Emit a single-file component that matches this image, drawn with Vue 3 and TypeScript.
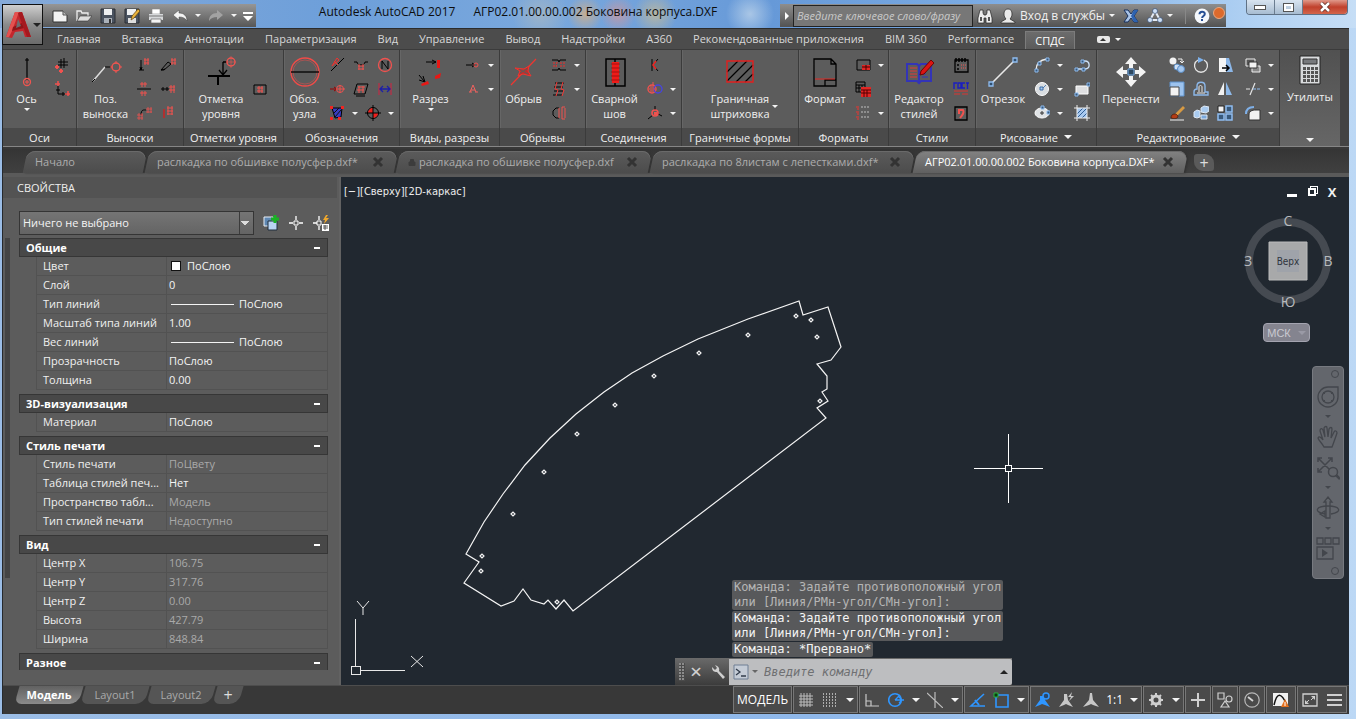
<script setup lang="ts">
import { h, ref } from 'vue'
import type { FunctionalComponent } from 'vue'

const shapes: Record<string, string> = {
  // application bar
  logo: '<path d="M2 27 11 2h7l9 25h-6l-2-6-8 1-3 6z" fill="#c3262c"/><path d="M11 2h4L8 21l-3 6H2z" fill="#e4514f"/><path d="m9 17 9-4 2 5-12 3z" fill="#8f1519"/><path d="m14 9 3 7-5 2z" fill="#6d6d70"/><path d="m18 2 9 25h-4L14 3z" fill="#a5191f"/>',
  new: '<path d="M1 3h10l4 4v7H1z" fill="#f2f2f2" stroke="#333"/><path d="M11 3v4h4" fill="#bbb" stroke="#555"/>',
  open: '<path d="M1 13V3h4l1 2h6v3" fill="none" stroke="#eee" stroke-width="1.3"/><path d="M1 13 4 8h12l-4 5z" fill="#ddd" stroke="#333" stroke-width=".6"/>',
  save: '<path d="M1 1h14v14H1z" fill="#4a5360" stroke="#2b2f35"/><path d="M4 1h8v6H4z" fill="#eef0f2"/><path d="M4 10h8v5H4z" fill="#aab1ba"/><path d="M9 11h2v4H9z" fill="#333"/>',
  saveas: '<path d="M1 1h14v14H1z" fill="#4a5360" stroke="#2b2f35"/><path d="M3 1h9v6H3z" fill="#eef0f2"/><path d="M4 10h8v5H4z" fill="#ddd"/><path d="m7 12 1-4 6-7 2 2-6 7z" fill="#e8b23c" stroke="#5d4210" stroke-width=".7"/>',
  print: '<path d="M4 1h8v5H4z" fill="#fff" stroke="#888" stroke-width=".6"/><path d="M1 6h14v6H1z" fill="#d6d8da"/><path d="M1 8h14" stroke="#777"/><path d="M3 11h10v4H3z" fill="#f4f4f4" stroke="#666" stroke-width=".7"/>',
  undo: '<path d="M1 7 7 2v3c5 0 8 3 8 8-2-3-4-4-8-4v3z" fill="#f3f3f3" stroke="#444" stroke-width=".5"/>',
  redo: '<path d="M15 7 9 2v3C4 5 1 8 1 13c2-3 4-4 8-4v3z" fill="#a2a2a2"/>',
  more: '<path d="M3 4h10v2H3zM3 8h10l-5 5z" fill="#fff"/>',
  find: '<path d="M3 2h3v3l1 2h2l1-2V2h3l2 8v5H9v-5H7v5H1v-5z" fill="#eee" stroke="#222" stroke-width=".7"/><path d="M3 9h2v4H3zM11 9h2v4h-2z" fill="#555"/>',
  user: '<path d="M8 1c3 0 4 2 4 5 0 2-1 4-2 5l5 3v1H1v-1l5-3C5 10 4 8 4 6c0-3 1-5 4-5z" fill="#e9e9e9" stroke="#222" stroke-width=".7"/>',
  exchange: '<path d="M1 2h4l3 4 3-4h4l-4 6 4 6h-4l-3-4-3 4H1l4-6z" fill="#a9c3e6" stroke="#16305e"/><path d="M11 2h4l-4 6 4 6h-4L8 8z" fill="#2d62b0"/>',
  a360: '<path d="m8 3 5 9H3z" fill="none" stroke="#e4ebf5" stroke-width="2"/><circle cx="8" cy="3" r="2.500" fill="#cfe0f5" stroke="#24406b" stroke-width=".6"/><circle cx="3" cy="12" r="2.500" fill="#cfe0f5" stroke="#24406b" stroke-width=".6"/><circle cx="13" cy="12" r="2.500" fill="#cfe0f5" stroke="#24406b" stroke-width=".6"/>',
  help: '<circle cx="8" cy="8" r="7.4" fill="#f5f8fc"/><path d="M5.500 6.300c0-3.600 5.300-3.400 5.300-.3 0 2-2.700 1.900-2.700 4" fill="none" stroke="#274f94" stroke-width="2"/><path d="M7 11h2v2H7z" fill="#274f94"/>',
  // ribbon, 32px
  axis: '<path d="M16 2v22M14 4h4" stroke="#000" stroke-width="1.200" fill="none"/><circle cx="16" cy="26" r="3.500" fill="none" stroke="#f05550" stroke-width="1.300"/><path d="M14 26h4M16 24v4" stroke="#f05550"/>',
  leader: '<path d="m3 25 12-14" stroke="#ddd" stroke-width="1.500"/><path d="M15 11h6M2 26l3-3" stroke="#000"/><circle cx="26" cy="11" r="4" fill="none" stroke="#f05550" stroke-width="1.400"/><path d="M20 11h3M29 11h3M26 5v3M26 14v3" stroke="#f05550"/>',
  level: '<path d="M3 20h22M13 20v9" stroke="#000" stroke-width="2"/><path d="M18 6v13M14 14l4 5 4-5M18 6h4" stroke="#000" fill="none" stroke-width="1.300"/><circle cx="26" cy="6" r="4" fill="none" stroke="#f05550" stroke-width="1.400"/><path d="M26 0v12M21 6h10" stroke="#f05550" stroke-width=".6"/>',
  node: '<circle cx="16" cy="16" r="14" fill="none" stroke="#f04b48" stroke-width="1.400"/><circle cx="16" cy="16" r="12" fill="none" stroke="#f04b48" stroke-width=".5"/><path d="M2 16h28" stroke="#000" stroke-width="1.300"/>',
  section: '<path d="M11 6h10M17 4l4 2-4 2M4 19l5 6M4 24l6 2-2-6" stroke="#000" fill="none"/><path d="M22 4h3v8h-3zM20 20l6-3-1 5-5 1zM6 28l7-3 1 3-7 2z" fill="#e81815"/>',
  breakline: '<path d="M3 29 28 3" stroke="#f03530" fill="none" stroke-width="1.200"/><path d="m7 12 9 1 5-3-1 5 3 5-8-2-5 2 2-5z" fill="#b9312e" stroke="#f03530"/><path d="m11 13 9 5M12 17l7-4" stroke="#5c5c5c"/>',
  weld: '<path d="M7 3h19v27H7zM16 3v27" stroke="#000" fill="none" stroke-width="1.500"/><path d="M13 6h7v21h-7z" fill="#f01b18"/><path d="M12 8h9M12 12h9M12 16h9M12 20h9M12 24h9" stroke="#9f1513"/>',
  hatch: '<path d="m3 16 11-11M3 25 23 5M12 26 29 9M21 26l8-8" stroke="#000" stroke-width="1.200"/><path d="M3 5h26v21H3z" stroke="#e41f1e" fill="none" stroke-width="1.400"/>',
  format: '<path d="M5 3h17l5 5v22H5zM22 3v5h5M16 30v-6h11" stroke="#000" fill="none" stroke-width="1.300"/><path d="M6 23h20" stroke="#e32922"/>',
  editor: '<path d="M4 8h10l2 2 2-2h10v17H18l-2 2-2-2H4zM16 10v16" stroke="#3334b8" fill="none" stroke-width="2"/><path d="M7 12h7M7 15h7M7 18h7M7 21h7" stroke="#e23a37"/><path d="M19 21h6M19 18h4" stroke="#3334b8"/><path d="m18 15 10-11 3 3-10 11-4 1z" fill="#dc1512" stroke="#6d0503"/>',
  line: '<path d="M5 27 27 5" stroke="#e9e9e9" stroke-width="1.600"/><path d="M2 26h4v4H2zM26 2h4v4h-4z" fill="#31506f" stroke="#8ebcf0" stroke-width="1.300"/>',
  move: '<path d="m16 1 6 7h-4v4h-4V8h-4zM16 31l6-7h-4v-4h-4v4h-4zM1 16l7-6v4h4v4H8v4zM31 16l-7-6v4h-4v4h4v4z" fill="#f3f3f3"/><path d="M13 13h6v6h-6z" fill="#2e485f" stroke="#7ab2ee"/>',
  calc: '<path d="M6 2h20v28H6z" fill="#d9dbdd" stroke="#222"/><path d="M9 5h14v5H9z" fill="#77797c" stroke="#333"/><path d="M9 13h3v3H9zM13 13h3v3h-3zM17 13h3v3h-3zM21 13h3v3h-3zM9 17h3v3H9zM13 17h3v3h-3zM17 17h3v3h-3zM21 17h3v3h-3zM9 21h3v3H9zM13 21h3v3h-3zM17 21h3v3h-3zM21 21h3v3h-3zM9 25h3v3H9zM13 25h3v3h-3zM17 25h3v3h-3zM21 25h3v3h-3z" fill="#555"/>',
  // ribbon, 16px
  axgrid: '<path d="M7 2v9M10 1v10M4 5h10M4 8h10" stroke="#000" fill="none"/><path d="M3 8v4M1 10h4M7 12v4M5 14h4" stroke="#f0524f" stroke-width="2"/>',
  axcorner: '<path d="M4 5v8h9M2 9h4M9 11v4" stroke="#000" fill="none"/><path d="M4 0v5M1 3h5M14 10v5M11 13h5" stroke="#f0524f" stroke-width="1.500"/>',
  n1: '<path d="M5 3v10M3 13h5M4 10l1 3 1-3" stroke="#000" fill="none"/><path d="M8 3h5M8 6h5M9 1v7M12 1v7" stroke="#f0524f"/>',
  n2: '<path d="m1 13 7-8 3 2-7 6zM1 13l4-1" stroke="#000" fill="none"/><path d="M11 3h5M11 6h5M12 1v7M15 1v7" stroke="#f0524f"/>',
  n3: '<path d="M1 8h14" stroke="#000"/><path d="M6 1v5M9 1v5M4 3h7M6 10v5M9 10v5M4 12h7" stroke="#f0524f"/>',
  n4: '<path d="M1 8h8M3 6v4M7 6v4" stroke="#000"/><path d="M9 6h6M9 9h6M11 4v8M14 4v8" stroke="#f0524f"/>',
  n5: '<path d="M5 10c0-6 3-5 5-5" stroke="#000" fill="none"/><path d="M1 10h6M1 13h6M3 8v7M6 8v7M10 4h6M10 7h6M12 2v6M15 2v6" stroke="#f0524f" stroke-width=".8"/>',
  n6: '<path d="M4 4v9" stroke="#c22" stroke-width="1.500"/><path d="M7 3h6M7 6h6M7 9h6M8 1v9M12 1v9" stroke="#f0524f"/>',
  framed: '<path d="M2 4h12v9H2z" stroke="#000" fill="none"/><path d="M5 7h6M5 10h6M7 5v7M10 5v7" stroke="#f0524f"/>',
  slope: '<path d="M2 14 15 1" stroke="#000"/><path d="m3 9 5-8 2 2zM5 4l4 4" stroke="#f0322e" fill="none"/>',
  arc1: '<path d="M1 5h3c0 4 8 4 8 0h3" stroke="#000" fill="none"/><path d="M5 9h6M6 7v6M10 7v6M5 12h6" stroke="#f0524f"/>',
  north: '<circle cx="8" cy="8" r="6.500" fill="none" stroke="#f0524f" stroke-width="1.300"/><path d="M5 12V4l6 8V4" stroke="#000" fill="none"/>',
  arrowNode: '<path d="M1 8h7M5 6l3 2-3 2" stroke="#900" fill="none"/><circle cx="11" cy="8" r="3.500" fill="none" stroke="#f0524f"/><path d="M8 8h8M11 4v8" stroke="#f0524f"/>',
  para: '<path d="M4 3h11l-3 10H1zM3 15h9" stroke="#000" fill="none"/><path d="M5 6h7M4 9h7M6 5v7M10 5v7" stroke="#f0524f"/>',
  dim: '<path d="M2 2v12M14 2v12" stroke="#d32040"/><path d="M3 8h10M6 5 3 8l3 3M10 5l3 3-3 3" stroke="#1d1fa8" fill="none" stroke-width="1.300"/>',
  region: '<path d="M3 3h10l-1 9-6 1z" fill="#3a3dc0" stroke="#000"/><path d="m4 9 6-6M6 12l6-7" stroke="#111"/><path d="M1 1h3v3H1zM12 1h3v3h-3zM1 12h3v3H1zM9 12h3v3H9z" fill="#f02522"/>',
  target: '<circle cx="8" cy="8" r="5.500" fill="#5c5c5c" stroke="#000"/><path d="M8 3a5 5 0 0 0-5 5h5zM8 13a5 5 0 0 0 5-5H8z" fill="#ef1f1c"/><path d="M8 0v16M0 8h16" stroke="#000"/>',
  view1: '<path d="M1 8h9M7 6l3 2-3 2" stroke="#000" fill="none"/><circle cx="11" cy="8" r="2" fill="none" stroke="#f0524f"/>',
  letterA: '<path d="m5 11 3-7 3 7M6 9h4M4 11h3M10 11h3" stroke="#f0625f" fill="none"/>',
  gap1: '<path d="M1 3h6l1 2 1-2h6M1 13h6l1-2 1 2h6" stroke="#000" fill="none"/><path d="M3 5v6M6 5l-1 6M10 5v6M13 5v6" stroke="#f02d2a" stroke-dasharray="2 1"/>',
  gap2: '<path d="M4 2h9M3 6h9M3 10h9M2 14h9" stroke="#000"/><path d="M6 1 4 8l3 1-2 6M12 1l-2 7 3 1-2 6" stroke="#f03835" fill="none"/>',
  gap3: '<path d="M8 3H5L2 6v4l3 3h3" stroke="#000" fill="none"/><path d="M8 3v10M11 2v12M14 3v10M11 2h3M11 14h3" stroke="#f0524f" fill="none"/>',
  weldK: '<path d="M5 2v12M11 2 6 8l5 6" stroke="#000" fill="none"/><path d="m9 4-3 4 3 4" stroke="#f02522" fill="none" stroke-width="1.500"/>',
  bolt: '<circle cx="5" cy="8" r="4" fill="none" stroke="#f0524f" stroke-width="1.400"/><circle cx="11" cy="8" r="4" fill="none" stroke="#4644e0" stroke-width="1.400"/><path d="M2 8h6M3 6h4M3 10h4M6 1v3" stroke="#f0524f"/>',
  knot: '<path d="m1 14 5-4M8 1v4M11 9l4 2" stroke="#000"/><circle cx="8" cy="8" r="3" fill="none" stroke="#f0524f" stroke-width="1.500"/><path d="M7 7h3v3H7z" fill="#f0524f"/>',
  fmt1: '<path d="M2 3h13v10H2z" stroke="#000" fill="none"/><path d="M7 8h8v5H7z" fill="#e22724"/><path d="M7 10h8M11 8v5" stroke="#400"/>',
  fmt2: '<path d="M1 1h9v10H1zM1 4h9M4 4v7M7 4v7M1 7h9" stroke="#000" fill="none"/><path d="M6 6h10v10H6z" fill="#e22724"/><path d="M6 9h10M9 9v7M12 9v7M6 12h10" stroke="#500"/>',
  fmt3: '<path d="M1 2h3M1 7h3M1 12h3M2 4h2M2 9h2M2 14h2" stroke="#f0322e"/><path d="M6 2h9M6 7h9M6 12h9" stroke="#8d8d8d" stroke-width="2" stroke-dasharray="2 1"/>',
  st1: '<path d="M2 3h13v12H2z" stroke="#000" fill="none" stroke-width="1.300"/><path d="M3 1v4M6 1v4M9 1v4M12 1v4M4 8h2M4 12h2" stroke="#000" stroke-width="1.500"/><path d="M8 8h5M8 11h5" stroke="#f0524f" stroke-dasharray="1 1"/>',
  st2: '<path d="M1 8V2h3M5 2h3v5H5zM12 2H9v5h3M13 2h4M14.500 2v6" stroke="#1a1ec0" fill="none" stroke-width="1.400"/><path d="M1 10h14M1 13h6M9 13h6" stroke="#dd3431"/>',
  st3: '<path d="M2 2h12v13H2z" stroke="#000" fill="none" stroke-width="1.300"/><path d="M6 9V5h4c2 3-1 5-3 8" stroke="#f0524f" fill="none" stroke-width="2"/>',
  arc: '<path d="M2 13C2 7 6 3 13 2" stroke="#eee" fill="none" stroke-width="1.300"/><path d="M1 12h3v3H1zM4 5h3v3H4zM12 1h3v3h-3z" fill="#39597a" stroke="#8ebcf0"/>',
  circle: '<circle cx="8" cy="8" r="6.500" fill="#d9dde1" stroke="#fff"/><path d="m8 8 4-4" stroke="#5283b8"/><path d="M6 6h3v3H6z" fill="#a9ccf2" stroke="#3c6ca5"/>',
  ellipse: '<ellipse cx="8" cy="8" rx="7" ry="5" fill="#e0e3e6" stroke="#fff"/><path d="M6 8h4M8 6v4" stroke="#333"/><path d="M7 1h3v3H7zM13 6h3v3h-3z" fill="#39597a" stroke="#8ebcf0"/>',
  pline: '<path d="M2 12h9c6 0 5-8 0-8H8" stroke="#cfe2f7" fill="none" stroke-width="1.300"/><path d="M1 11h3v3H1zM8 11h3v3H8zM7 3h3v3H7z" fill="#39597a" stroke="#8ebcf0"/>',
  rect: '<path d="M2 5h12v8H2z" fill="#dedfe1" stroke="#fff"/><path d="M13 2h3v3h-3zM1 12h3v3H1z" fill="#39597a" stroke="#8ebcf0"/>',
  hatch2: '<path d="M3 3h10v10H3z" fill="#a7c8ee"/><path d="m3 9 6-6M3 13 13 3M8 13l5-5" stroke="#315f97"/><path d="M3 0v16M13 0v16M0 3h16M0 13h16" stroke="#eee"/>',
  copy: '<circle cx="4" cy="4" r="3.500" fill="#f2f2f2"/><circle cx="8" cy="10" r="3" fill="#cfe0f4" stroke="#5b8dc6"/><circle cx="12" cy="12" r="3.500" fill="#a5c7ee" stroke="#5b8dc6"/><path d="M9 2h4v3M11 4l2 2 2-2" stroke="#eee" fill="none"/>',
  rotate: '<path d="M5 3a6.500 6.500 0 1 0 6 0" stroke="#e3e3e3" fill="none" stroke-width="1.300"/><path d="m5 0 6 3-6 3z" fill="#7db1ec"/>',
  stretch: '<path d="M2 1h7v14H2z" fill="#f5f5f5"/><path d="M9 1h3l4 14H9z" fill="#8cb7e8"/><path d="M5 11h7M9 8l3 3-3 3" stroke="#000" fill="none" stroke-width="1.500"/>',
  scale: '<path d="M1 1h14v14H1z" fill="#9dc3ee" stroke="#5e92cc"/><path d="M1 6h9v9H1z" fill="#f2f2f2" stroke="#444"/>',
  offset: '<path d="M1 14h14v-3h-3V5c0-5-8-5-8 0v3c-2 0-3 1-3 3z" stroke="#8cb8ea" fill="none" stroke-width="1.400"/><path d="M4 12h8M6 11V6c0-2 3-2 3 0v5" stroke="#e8e8e8" fill="none"/>',
  mirror: '<path d="M7 1v13H1z" fill="#f1f1f1"/><path d="M9 1v13h6z" fill="#8fb9e9"/>',
  brush: '<path d="m6 9 8-8 2 2-8 8z" fill="#d79a43"/><path d="M2 13c0-4 3-4 5-4l2 2c0 3-4 3-7 2z" fill="#b33d16" stroke="#331004" stroke-width=".6"/><path d="M1 15h14" stroke="#eee"/>',
  explode: '<path d="m1 7 3-2 3 1v6l-3 1-3-1zM8 3l3-2 5 1v4l-3 2-5-1z" fill="#a9cbf0" stroke="#dfe9f5"/><path d="M8 10h6v4H8z" fill="#7aa8dd" stroke="#dfe9f5"/>',
  array: '<path d="M1 1h6v6H1z" fill="#f2f2f2" stroke="#222"/><path d="M9 1h6v6H9zM1 9h6v6H1zM9 9h6v6H9z" fill="#39597a" stroke="#8ebcf0" stroke-width="1.500"/>',
  order: '<path d="M1 2h9v7H1z" stroke="#eee" fill="#555"/><path d="M7 9h8v6H7z" fill="#888" stroke="#eee"/><path d="M4 5h8v6H4z" fill="#f2f2f2" stroke="#333"/>',
  trim: '<path d="M1 8h4M5 14l5-12" stroke="#e4e4e4" stroke-width="1.200"/><path d="M8 8h8" stroke="#8ebcf0" stroke-dasharray="3 1"/>',
  fillet: '<path d="M4 15V10c0-4 3-5 7-5h4v10z" fill="#f2f2f2" stroke="#333"/><path d="M1 9c0-5 3-7 8-7" stroke="#7fb0e8" fill="none" stroke-width="2"/>',
  // properties toolbar
  quick: '<path d="M1 2h9v9H1z" fill="#5e87b2" stroke="#e8eef5"/><path d="M5 6h9v9H5z" fill="#b8d5f4" stroke="#1e2d3d"/><path d="M12 0v8M8 4h8" stroke="#19b324" stroke-width="3"/>',
  pick: '<path d="M8 1v4M8 11v4M1 8h4M11 8h4" stroke="#fff" stroke-width="1.300"/><path d="M6 6h4v4H6z" stroke="#fff" fill="none"/>',
  pickadd: '<path d="M6 1v4M6 11v4M0 8h4" stroke="#fff" stroke-width="1.300"/><path d="M4 6h4v4H4z" stroke="#fff" fill="none"/><path d="M9 9h7v7H9z" fill="#fff"/><path d="M10 11h5M10 13h5M12 10v5" stroke="#333" stroke-width=".8"/><path d="m13 0-3 5h2l-1 4 5-6h-3l2-3z" fill="#f0a82c"/>',
  // navigation bar, 24px
  wheel: '<path d="M12 2h10v10a10 10 0 1 1-10-10z" fill="none" stroke="#43464c" stroke-width="1.300"/><circle cx="12" cy="12" r="6" fill="none" stroke="#43464c" stroke-width="1.300"/><path d="m7 7 2 2M17 7l-2 2M7 17l2-2M17 17l-2-2" stroke="#43464c"/>',
  hand: '<path d="M8 22c-2-4-5-6-6-9 1-2 3-1 5 2L4 6c0-3 2-3 3-1l2 7-1-9c1-2 3-2 3 0l1 9 1-8c1-2 3-2 3 0l-1 9 3-6c1-2 3-1 3 1-2 6-3 9-5 14z" fill="none" stroke="#43464c" stroke-width="1.300"/>',
  zoomx: '<path d="m2 2 14 14M16 2 2 16M2 6V2h4M12 2h4v4M2 12v4h4" stroke="#43464c" fill="none" stroke-width="1.500"/><circle cx="17" cy="16" r="4.500" fill="#63666c" stroke="#43464c" stroke-width="1.500"/><path d="m20 19 4 4" stroke="#43464c" stroke-width="2.500"/>',
  orbit: '<path d="M10 22V6H8l4-5 4 5h-2v16z" stroke="#43464c" fill="none" stroke-width="1.300"/><path d="M9 18C-3 16 0 10 12 10s15 6 3 8M9 15v6l-5-3z" stroke="#43464c" fill="none" stroke-width="1.300"/>',
  motion: '<path d="M1 2h6v6H1zM9 2h6v6H9zM17 2h6v6h-6zM1 11h16v12H1z" stroke="#43464c" fill="none" stroke-width="1.300"/><path d="m6 13 6 4-6 4z" fill="#43464c"/>',
  // status bar
  grid: '<path d="M3 1v14M6 1v14M9 1v14M12 1v14M1 4h14M1 7h14M1 10h14M1 13h14" stroke="#bdbdbd"/>',
  snap: '<path d="M1 2h15M1 5h15M1 8h15M1 11h15M1 14h15" stroke="#d0d0d0" stroke-width="1.300" stroke-dasharray="1 2"/>',
  ortho: '<path d="M2 2v12h13M2 9h5v5" stroke="#c8c8c8" fill="none" stroke-width="1.200"/>',
  polar: '<circle cx="7" cy="8" r="6.300" fill="none" stroke="#2f96ff" stroke-width="1.600"/><path d="M7 8h9M7 8l5-5M11 5l3 3-3 3" stroke="#2f96ff" fill="none" stroke-width="1.300"/>',
  iso: '<path d="m0 1 16 15M8 0v16" stroke="#bdbdbd" fill="none" stroke-width="1.200"/>',
  track: '<path d="M15 2 2 14h14" stroke="#2f96ff" fill="none" stroke-width="1.600"/><path d="m6 8 4 5" stroke="#2f96ff" stroke-width="2"/>',
  osnap: '<path d="M3 3h12v12H3z" stroke="#2f96ff" fill="none" stroke-width="1.600"/><path d="M1 1h4v4H1z" fill="#0b3b14" stroke="#26b43b"/>',
  person: '<path d="M5 4h4l1 4 5 7-5-2-3-1-2 1-5 2 5-7z" fill="#2f96ff"/><circle cx="11" cy="4" r="3" fill="#28476b" stroke="#2f96ff" stroke-width="1.500"/>',
  person2: '<path d="M5 2h3l1 6 5 7-5-2-2-1-2 1-5 2 5-7z" fill="#c7c7c7"/><path d="m13 0-4 5h3l-2 4 5-5h-3z" fill="#c7c7c7"/>',
  person3: '<path d="M7 1h2l1 7 6 7-6-2-2-1-2 1-6 2 6-7z" fill="#c7c7c7"/>',
  gear: '<circle cx="8" cy="8" r="4" fill="none" stroke="#cfcfcf" stroke-width="3"/><path d="M8 1v3M8 12v3M1 8h3M12 8h3M3 3l2 2M11 11l2 2M13 3l-2 2M3 13l2-2" stroke="#cfcfcf" stroke-width="2"/>',
  plus: '<path d="M8 1v14M1 8h14" stroke="#d0d0d0" stroke-width="2"/>',
  shapes: '<path d="M1 1h6v6H1zM8 9l4 6H4z" stroke="#cfcfcf" fill="none" stroke-width="1.200"/><circle cx="12" cy="7" r="3" fill="none" stroke="#cfcfcf" stroke-width="1.200"/>',
  clock: '<circle cx="8" cy="8" r="7.200" fill="none" stroke="#b8b8b8" stroke-width="1.200"/><path d="m4 5 5 4" stroke="#d5d5d5" stroke-width="1.800"/>',
  wave: '<path d="M0 1h15v13H0z" fill="#f1f1f1"/><path d="M1 13C4 0 8 0 14 13" stroke="#111" fill="none" stroke-width="1.500"/><path d="m12 7 4 8H8z" fill="#e3711f"/><path d="M12 10v4" stroke="#fff"/>',
  full: '<path d="M1 2h14v12H1z" stroke="#d0d0d0" fill="none" stroke-width="1.300"/><path d="M9 4h4v4zM3 8v4h4z" fill="#d0d0d0"/><path d="m9 8 3-3M4 11l3-3" stroke="#d0d0d0"/>',
  burger: '<path d="M1 3h15M1 8h15M1 13h15" stroke="#d0d0d0" stroke-width="2"/>',
  wrench: '<path d="M2 3c0 4 2 5 5 5l6 7 2-2-6-6c1-3-1-5-4-6l2 3-2 2z" fill="#cfcfcf"/>',
  prompt: '<path d="M1 1h14v14H1z" fill="#c5ccd6" stroke="#6f7e94"/><path d="m3 5 4 3-4 3M8 12h5" stroke="#333d4c" fill="none" stroke-width="1.300"/>',
  lock: '<path d="M2 8h12v7H2zM5 8V3h6v5" fill="#3c3c3c" fill-rule="evenodd" stroke="#3c3c3c" stroke-width="2"/>',
  cross: '<path d="m4 4 8 8M12 4l-8 8" stroke="#333" stroke-width="3"/>'
}

const Icon: FunctionalComponent<{ name: string; box?: number }> = (props) =>
  h('svg', {
    viewBox: `0 0 ${props.box ?? 16} ${props.box ?? 16}`,
    width: props.box ?? 16,
    height: props.box ?? 16,
    'aria-hidden': 'true',
    innerHTML: shapes[props.name]
  })
Icon.props = ['name', 'box']

interface Panel {
  title: string
  width: number
  inset?: number
  label: string[]
  icon: string
  bigWidth: number
  drop?: 'below' | 'side'
  menu?: boolean
  rows: string[][]
}

const CARET = 'v'
const GAP = '-'

const panels: Panel[] = [
  { title: 'Оси', width: 74, label: ['Ось'], icon: 'axis', bigWidth: 47, drop: 'below', rows: [['axgrid'], ['axcorner']] },
  { title: 'Выноски', width: 107, inset: 2, label: ['Поз.', 'выноска'], icon: 'leader', bigWidth: 53, rows: [['n1', 'n2'], ['n3', 'n4'], ['n5', 'n6']] },
  { title: 'Отметки уровня', width: 100, inset: 10, label: ['Отметка', 'уровня'], icon: 'level', bigWidth: 54, rows: [[], ['framed']] },
  { title: 'Обозначения', width: 116, label: ['Обоз.', 'узла'], icon: 'node', bigWidth: 41, rows: [['slope', 'arc1', 'north'], ['arrowNode', 'para', 'dim'], ['region', CARET, 'target', CARET]] },
  { title: 'Виды, разрезы', width: 100, label: ['Разрез'], icon: 'section', bigWidth: 61, drop: 'below', rows: [['view1', CARET], ['letterA', CARET]] },
  { title: 'Обрывы', width: 86, label: ['Обрыв'], icon: 'breakline', bigWidth: 47, rows: [['gap1', CARET], ['gap2', CARET], ['gap3']] },
  { title: 'Соединения', width: 96, label: ['Сварной', 'шов'], icon: 'weld', bigWidth: 57, rows: [['weldK'], ['bolt', CARET], ['knot', CARET]] },
  { title: 'Граничные формы', width: 117, label: ['Граничная', 'штриховка'], icon: 'hatch', bigWidth: 116, drop: 'side', rows: [] },
  { title: 'Форматы', width: 90, label: ['Формат'], icon: 'format', bigWidth: 52, rows: [['fmt1', CARET], ['fmt2'], ['fmt3', CARET]] },
  { title: 'Стили', width: 87, label: ['Редактор', 'стилей'], icon: 'editor', bigWidth: 60, rows: [['st1'], ['st2'], ['st3']] },
  { title: 'Рисование', width: 121, label: ['Отрезок'], icon: 'line', bigWidth: 54, menu: true, rows: [['arc', CARET, GAP, 'pline'], ['circle', CARET, GAP, 'rect'], ['ellipse', CARET, GAP, 'hatch2']] },
  { title: 'Редактирование', width: 183, label: ['Перенести'], icon: 'move', bigWidth: 68, menu: true, rows: [['copy', 'rotate', 'stretch', GAP, 'order', CARET], ['scale', 'offset', 'mirror', GAP, 'trim', CARET], ['brush', 'explode', 'array', GAP, 'fillet', CARET]] }
]

const ribbonTabs = ['Главная', 'Вставка', 'Аннотации', 'Параметризация', 'Вид', 'Управление', 'Вывод', 'Надстройки', 'A360', 'Рекомендованные приложения', 'BIM 360', 'Performance', 'СПДС']
const activeRibbon = ref('СПДС')

const quickAccess = ['new', 'open', 'save', 'saveas', 'print', 'undo', CARET, 'redo', CARET, 'more']

const files = [
  { name: 'Начало', width: 122, close: false, lock: false },
  { name: 'раслкадка по обшивке полусфер.dxf*', width: 251, close: true, lock: false },
  { name: 'раслкадка по обшивке полусфер.dxf', width: 254, close: true, lock: true },
  { name: 'раслкадка по 8листам с лепестками.dxf*', width: 263, close: true, lock: false },
  { name: 'АГР02.01.00.00.002 Боковина корпуса.DXF*', width: 273, close: true, lock: false }
]
const activeFile = ref(4)

type Row = [string, string, ('swatch' | 'line' | 'dim')?]
const sections: { title: string; rows: Row[] }[] = [
  { title: 'Общие', rows: [['Цвет', 'ПоСлою', 'swatch'], ['Слой', '0'], ['Тип линий', 'ПоСлою', 'line'], ['Масштаб типа линий', '1.00'], ['Вес линий', 'ПоСлою', 'line'], ['Прозрачность', 'ПоСлою'], ['Толщина', '0.00']] },
  { title: '3D-визуализация', rows: [['Материал', 'ПоСлою']] },
  { title: 'Стиль печати', rows: [['Стиль печати', 'ПоЦвету', 'dim'], ['Таблица стилей печ...', 'Нет'], ['Пространство табл...', 'Модель', 'dim'], ['Тип стилей печати', 'Недоступно', 'dim']] },
  { title: 'Вид', rows: [['Центр X', '106.75', 'dim'], ['Центр Y', '317.76', 'dim'], ['Центр Z', '0.00', 'dim'], ['Высота', '427.79', 'dim'], ['Ширина', '848.84', 'dim']] },
  { title: 'Разное', rows: [] }
]

const outline = '349,11 353,25 378,17 391,57 381,70 367,74 377,86 377,99 372,102 378,111 367,118 376,128 123,321 114,310 106,319 98,310 94,314 81,310 73,299 64,311 51,316 14,293 29,272 16,264 34,232 53,204 75,175 100,148 126,124 154,102 182,83 213,66 248,49 298,29'
const holes = [[346, 26], [361, 30], [367, 47], [298, 45], [249, 63], [204, 86], [165, 115], [127, 144], [94, 182], [63, 224], [32, 266], [31, 281], [107, 312], [370, 111]]

const layouts = ['Модель', 'Layout1', 'Layout2']
const activeLayout = ref('Модель')

const statusGroups = [['grid', 'snap', CARET], ['ortho', 'polar', CARET, 'iso', CARET], ['track', 'osnap', CARET], ['person', 'person2', 'person3', '1:1', CARET], ['gear', CARET], ['plus'], ['shapes'], ['clock'], ['wave'], ['full', 'burger']]
</script>

<template>
  <div class="window">
    <header class="titlebar">
      <button class="app-button" aria-label="Меню приложения">
        <Icon name="logo" :box="29" /><span class="caret dark"></span>
      </button>
      <div class="quick-access">
        <button v-for="(item, i) in quickAccess" :key="i" :class="{ slim: item === 'v' }" :aria-label="item">
          <span v-if="item === 'v'" class="caret"></span><Icon v-else :name="item" />
        </button>
      </div>
      <h1><span>Autodesk AutoCAD 2017</span><span>АГР02.01.00.00.002 Боковина корпуса.DXF</span></h1>
      <div class="info-center">
        <button class="expand" aria-label="Свернуть"></button>
        <input type="text" placeholder="Введите ключевое слово/фразу" aria-label="Поиск" />
        <button aria-label="Найти"><Icon name="find" /></button>
        <button class="login"><Icon name="user" /><span>Вход в службы</span><span class="caret"></span></button>
        <button aria-label="Exchange"><Icon name="exchange" /></button>
        <button class="cloud" aria-label="A360"><Icon name="a360" /><span class="caret"></span></button>
        <button class="help" aria-label="Справка"><Icon name="help" /></button>
        <i class="alert"></i>
      </div>
      <div class="window-buttons">
        <button aria-label="Свернуть окно"><i class="min"></i></button>
        <button aria-label="Развернуть окно"><i class="max"></i></button>
        <button class="close" aria-label="Закрыть окно">
          <svg width="12" height="10" viewBox="0 0 12 10"><path d="m2 1 8 8M10 1 2 9" stroke="#5c2a22" stroke-width="4" /><path d="m2 1 8 8M10 1 2 9" stroke="#fff" stroke-width="2.500" /></svg>
        </button>
      </div>
    </header>

    <div class="frame">
      <nav class="ribbon-tabs">
        <button v-for="t in ribbonTabs" :key="t" :class="{ active: t === activeRibbon }" @click="activeRibbon = t">{{ t }}</button>
        <button class="ribbon-toggle" aria-label="Свернуть ленту"><i></i><span class="caret"></span></button>
      </nav>

      <div class="ribbon">
        <section v-for="p in panels" :key="p.title" class="panel" :style="{ width: p.width + 'px' }">
          <div class="tools" :style="{ paddingLeft: (p.inset ?? 0) + 'px' }">
            <button class="big" :style="{ width: p.bigWidth + 'px' }">
              <Icon :name="p.icon" :box="32" />
              <span v-for="l in p.label" :key="l">{{ l }}</span>
              <i v-if="p.drop" class="caret" :class="p.drop"></i>
            </button>
            <div class="small-tools">
              <div v-for="(row, r) in p.rows" :key="r" class="tool-row">
                <template v-for="(item, c) in row" :key="c">
                  <i v-if="item === '-'" class="gap"></i>
                  <button v-else-if="item === 'v'" class="drop" aria-label="Список"><span class="caret"></span></button>
                  <button v-else :aria-label="item"><Icon :name="item" /></button>
                </template>
              </div>
            </div>
          </div>
          <h2>{{ p.title }}<span v-if="p.menu" class="caret large"></span></h2>
        </section>
        <button class="utilities"><Icon name="calc" :box="32" /><span>Утилиты</span><span class="caret large"></span></button>
      </div>

      <nav class="file-tabs">
        <div v-for="(f, i) in files" :key="i" class="file-tab" :class="{ active: i === activeFile }" :style="{ width: f.width + 'px' }">
          <Icon v-if="f.lock" name="lock" class="lock" />
          <button class="file-name" @click="activeFile = i">{{ f.name }}</button>
          <button v-if="f.close" class="file-close" aria-label="Закрыть"><Icon name="cross" /></button>
        </div>
        <button class="file-add" aria-label="Новая вкладка">+</button>
      </nav>

      <main>
        <aside class="properties">
          <h2>СВОЙСТВА</h2>
          <div class="picker">
            <select aria-label="Выбор объектов"><option>Ничего не выбрано</option></select>
            <button aria-label="Быстрый выбор"><Icon name="quick" /></button>
            <button aria-label="Выбрать объекты"><Icon name="pick" /></button>
            <button aria-label="Переключить PICKADD"><Icon name="pickadd" /></button>
          </div>
          <div class="groups">
            <section v-for="s in sections" :key="s.title">
              <button class="group-head"><span>{{ s.title }}</span><i></i></button>
              <table v-if="s.rows.length">
                <tbody>
                  <tr v-for="r in s.rows" :key="r[0]">
                    <th scope="row">{{ r[0] }}</th>
                    <td :class="r[2]"><i v-if="r[2] === 'swatch' || r[2] === 'line'"></i>{{ r[1] }}</td>
                  </tr>
                </tbody>
              </table>
            </section>
          </div>
        </aside>

        <div class="viewport">
          <svg class="model" width="100%" height="100%">
            <g transform="translate(109 113)" fill="none" stroke="#f4f4f4" stroke-width="1.2">
              <polygon :points="outline" />
              <path v-for="(c, i) in holes" :key="i" :d="`M${c[0] - 2} ${c[1]}l2-2 2 2-2 2z`" />
            </g>
            <g transform="translate(667 291)" fill="none" stroke="#fff" shape-rendering="crispEdges">
              <path d="M-34 0h31M4 0h31M0-34v31M0 4v31M-3-3h6v6h-6z" />
            </g>
          </svg>
          <div class="view-label">[−][Сверху][2D-каркас]</div>
          <div class="view-buttons">
            <button aria-label="Свернуть"><i class="min"></i></button>
            <button aria-label="Восстановить"><i class="restore"></i></button>
            <button aria-label="Закрыть">X</button>
          </div>
          <svg class="cube" width="92" height="100" viewBox="0 0 92 100">
            <circle cx="46" cy="50" r="39" fill="none" stroke="#454a51" stroke-width="8" />
            <path d="M27 31h38v38H27z" fill="#a8a9aa" stroke="#bbb" />
            <path d="M35 39h22v22H35z" fill="#9fa3aa" />
            <g text-anchor="middle" font-size="14" fill="#b7babd">
              <text x="46" y="15">С</text><text x="46" y="96">Ю</text><text x="6" y="55">З</text><text x="86" y="55">В</text>
              <text x="46" y="54" class="face">Верх</text>
            </g>
          </svg>
          <button class="ucs-name">МСК<i></i></button>
          <div class="navbar">
            <i class="dot"></i>
            <button aria-label="Штурвал"><Icon name="wheel" :box="24" /></button><span class="caret"></span>
            <button aria-label="Панорамирование"><Icon name="hand" :box="24" /></button>
            <button aria-label="Зумирование"><Icon name="zoomx" :box="24" /></button><span class="caret"></span>
            <button aria-label="Орбита"><Icon name="orbit" :box="24" /></button><span class="caret"></span>
            <button aria-label="Аниматор"><Icon name="motion" :box="24" /></button>
            <i class="dot last"></i>
          </div>
          <svg class="ucs" width="90" height="76" viewBox="0 0 90 76" fill="none" stroke="#e8e8e8">
            <path d="M10 57V10M15 61h45M6 57h9v8H6z" shape-rendering="crispEdges" />
            <path d="m12-8 6 7 6-7M18-1v7M66 47l12 11M78 47 66 58" />
          </svg>
          <div class="command">
            <div class="history">
              <p class="old">Команда: Задайте противоположный угол<br />или [Линия/РМн-угол/СМн-угол]:</p>
              <p>Команда: Задайте противоположный угол<br />или [Линия/РМн-угол/СМн-угол]:</p>
              <p>Команда: *Прервано*</p>
            </div>
            <div class="command-line">
              <i class="grip"></i>
              <button class="dismiss" aria-label="Закрыть">×</button>
              <button aria-label="Адаптация"><Icon name="wrench" /></button>
              <label class="entry">
                <Icon name="prompt" /><span class="caret mid"></span>
                <input type="text" placeholder="Введите команду" aria-label="Командная строка" />
                <span class="caret up"></span>
              </label>
            </div>
          </div>
        </div>
      </main>

      <footer>
        <nav class="layouts">
          <button v-for="l in layouts" :key="l" :class="{ active: l === activeLayout }" @click="activeLayout = l"><span>{{ l }}</span></button>
          <button class="add" aria-label="Новый лист"><span>+</span></button>
        </nav>
        <div class="status">
          <div class="group"><button class="text">МОДЕЛЬ</button></div>
          <div v-for="(g, i) in statusGroups" :key="i" class="group">
            <button v-for="(item, j) in g" :key="j" :class="{ slim: item === 'v', text: item === '1:1', wide: item === 'wave' }" :aria-label="item">
              <span v-if="item === 'v'" class="caret large"></span>
              <template v-else-if="item === '1:1'">1:1</template>
              <Icon v-else :name="item" />
            </button>
          </div>
        </div>
      </footer>
    </div>
  </div>
</template>

<style>
body { margin: 0; }
</style>

<style scoped>
.window {
  box-sizing: border-box;
  height: 100vh;
  min-height: 600px;
  display: flex;
  flex-direction: column;
  padding: 0 7px 5px 2px;
  overflow: hidden;
  background: linear-gradient(90deg, #9bbde6, #8fb8ea 60%, #bcd8f5);
  color: #f0f0f0;
  font: 11px/16px "Open Sans", "Noto Sans", sans-serif;
}
button { margin: 0; padding: 0; border: 0; background: none; color: inherit; font: inherit; display: flex; align-items: center; justify-content: center; white-space: nowrap; }
h1, h2, p { margin: 0; font-size: 11px; font-weight: 400; }
svg { flex: none; display: block; }
.caret { flex: none; width: 0; height: 0; border: 3px solid transparent; border-top-color: #f4f4f4; border-bottom: 0; }
.caret.large { border-width: 4px; border-bottom: 0; }
.caret.dark { border-width: 4px; border-top-color: #222; border-bottom: 0; }
.caret.mid { border-top-color: #666; }
.caret.up { border: 4px solid transparent; border-bottom-color: #222; border-top: 0; }

.titlebar {
  position: relative;
  flex: none;
  height: 28px;
  margin: 0 -7px 0 -2px;
  padding-left: 43px;
  display: flex;
  background:
    radial-gradient(circle at 540px 14px, #9cb3c8 0, transparent 28px),
    radial-gradient(circle at 585px 14px, #c3ad94 0, transparent 18px),
    radial-gradient(circle at 618px 14px, #bb99aa 0, transparent 18px),
    radial-gradient(circle at 655px 14px, #b4b5a4 0, transparent 22px),
    radial-gradient(circle at 750px 14px, #a9c6e6 0, transparent 24px),
    linear-gradient(90deg, #86aad8, #6d9fda 25%, #7aa8dd 40%, #6699d8 57%, #86b4e8 80%, #b2d2f3 93%, #c6def6);
}
.app-button {
  position: absolute;
  left: 2px;
  top: 4px;
  z-index: 2;
  width: 41px;
  height: 41px;
  border: 1px solid #101010;
  background: linear-gradient(#cfcfcf, #8b8b8b 50%, #6b6b6b);
}
.quick-access { flex: none; margin-top: 4px; width: 213px; height: 23px; padding-left: 5px; box-sizing: border-box; display: flex; background: linear-gradient(#969696, #575757); }
.quick-access button { width: 24px; }
.quick-access button.slim { width: 12px; }
.quick-access button:last-child { width: 16px; }
h1 { flex: 1; display: flex; justify-content: center; gap: 18px; padding-top: 4px; font-size: 12px; color: #0d0d0d; white-space: nowrap; }
.info-center { margin-top: 4px; width: 446px; height: 23px; display: flex; align-items: center; background: linear-gradient(#8e8e8e, #525252); }
.expand { width: 13px; height: 23px; }
.expand::before { content: ""; border: 4px solid transparent; border-left-color: #fff; border-right: 0; }
.info-center input { box-sizing: border-box; width: 180px; height: 22px; padding: 0 3px; border: 1px solid #222; background: #777; color: #fff; font: italic 11px "Open Sans", sans-serif; }
.info-center input::placeholder { color: #c9c9c9; opacity: 1; }
.info-center button { margin-left: 4px; }
.info-center .expand { margin: 0; }
.info-center .login { margin-left: 7px; gap: 4px; font-size: 12px; }
.info-center .login + button { margin-left: 8px; }
.info-center .cloud { gap: 4px; margin-left: 8px; padding-right: 12px; border-right: 1px solid #888; }
.info-center .help { margin-left: auto; }
.alert { width: 12px; height: 12px; margin: -6px 1px 0 3px; border-radius: 50%; background: #dc6a2c; border: 1px solid #eba77f; box-sizing: border-box; }
.window-buttons { width: 102px; height: 15px; margin: 0 8px 0 20px; box-sizing: border-box; display: flex; border: 1px solid #5f7185; border-top: 0; border-radius: 0 0 4px 4px; overflow: hidden; }
.window-buttons button { flex: 28; background: linear-gradient(#d8e4f0, #a7bcd1); border-right: 1px solid #6b7d90; }
.window-buttons .close { flex: 46; border: 0; background: linear-gradient(#e0998a, #c0402c 50%, #d3654b); }
.min { width: 10px; height: 3px; background: #fff; border: 1px solid #555; }
.max { width: 5px; height: 3px; border: 2px solid #fff; outline: 1px solid #555; }

.frame { flex: 1; min-height: 0; display: flex; flex-direction: column; background: #383838; border-left: 1px solid #26292d; }
.ribbon-tabs { flex: none; height: 20px; padding-left: 44px; display: flex; gap: 1px; border-top: 1px solid #2c2c2c; background: #4c4c4c; color: #d8d8d8; }
.ribbon-tabs button { padding: 0 10px; }
.ribbon-tabs button.active { margin: 2px 0 0; padding: 0 9px; border: 1px solid #7c7c7c; border-bottom: 0; background: linear-gradient(#6c6c6c, #5b5b5b); color: #fff; }
.ribbon-tabs .ribbon-toggle { margin-left: 11px; gap: 5px; }
.ribbon-toggle i { width: 13px; height: 7px; border-radius: 2px; background: #e8e8e8; display: flex; align-items: center; justify-content: center; }
.ribbon-toggle i::before { content: ""; border: 3px solid transparent; border-bottom-color: #333; border-top: 0; }

.ribbon { flex: none; height: 98px; margin-bottom: 2px; display: flex; background: #434343; border-bottom: 1px solid #868686; border-top: 1px solid #3b3b3b; box-sizing: border-box; }
.panel { flex: none; box-sizing: border-box; display: flex; flex-direction: column; border-right: 1px solid #3b3b3b; background: #5c5c5c; }
.panel + .panel { box-shadow: inset 1px 0 #666; }
.tools { flex: 1; display: flex; }
.big { position: relative; flex: none; flex-direction: column; justify-content: flex-start; padding-top: 6px; line-height: 15px; }
.big svg { margin-bottom: 3px; }
.caret.below { margin-top: 2px; }
.caret.side { position: absolute; right: 20px; bottom: 20px; }
.small-tools { padding-top: 3px; }
.tool-row { height: 24px; display: flex; }
.tool-row button { width: 24px; }
.tool-row .drop { width: 12px; }
.gap { width: 4px; }
.panel h2 { height: 18px; line-height: 17px; display: flex; align-items: center; justify-content: center; gap: 6px; background: #4a4a4a; white-space: nowrap; }
.utilities { width: 60px; flex-direction: column; justify-content: flex-start; padding: 4px 0; gap: 3px; background: linear-gradient(#515151, #666); }
.utilities .large { margin-top: auto; }

.file-tabs { flex: none; height: 28px; padding: 2px 0 0 22px; display: flex; box-sizing: border-box; background: linear-gradient(#353535, #404040); color: #adadad; border-bottom: 4px solid #5a5a5a; }
.file-tab { position: relative; flex: none; display: flex; align-items: center; padding: 0 8px 0 10px; box-sizing: border-box; z-index: 0; }
.file-tab::before { content: ""; position: absolute; inset: 0 2px 0 0; z-index: -1; border-radius: 8px 10px 0 0; background: linear-gradient(#5b5b5b, #4c4c4c); box-shadow: inset 0 1px #6a6a6a, 2px 0 2px #333; transform: skewX(-12deg); }
.file-tab.active { color: #fff; }
.file-tab.active::before { background: linear-gradient(#828282, #606060); }
.file-close { margin-left: auto; margin-right: 4px; }
.lock { width: 8px; margin-right: 3px; }
.file-add { width: 20px; margin: 3px 0 2px 6px; border-radius: 3px 9px 3px 9px; background: #5a5a5a; color: #ddd; font-size: 16px; }

main { flex: 1; min-height: 0; display: flex; }
.properties { flex: none; width: 338px; box-sizing: border-box; display: flex; flex-direction: column; padding-bottom: 15px; overflow: hidden; background: #5c5c5c; border-right: 2px solid #626262; }
.properties h2 { flex: none; height: 21px; line-height: 21px; margin: 0 2px 0 0; padding-left: 14px; background: #535353; }
.picker { display: flex; align-items: center; margin: 13px 10px 3px 16px; }
.picker select { appearance: none; box-sizing: border-box; width: 237px; height: 24px; padding: 0 3px; border: 1px solid #353535; border-radius: 0; color: #f4f4f4; font: inherit; background: linear-gradient(45deg, transparent 50%, #ddd 50%) right 8px center / 4px 4px no-repeat, linear-gradient(-45deg, transparent 50%, #ddd 50%) right 4px center / 4px 4px no-repeat, linear-gradient(90deg, transparent calc(100% - 14px), #3b3b3b 0 calc(100% - 13px), transparent 0), linear-gradient(#757575, #646464); }
.picker button { margin-left: 8px; width: 17px; }
.groups { flex: 1; min-height: 0; overflow: hidden; margin-right: 11px; padding-left: 16px; background: linear-gradient(#444, #444) 2px 0 / 5px 340px no-repeat; }
.groups section { margin-bottom: 4px; }
.group-head { box-sizing: border-box; width: 100%; height: 19px; padding: 0 7px 0 6px; justify-content: space-between; border: 1px solid #363636; background: #484848; font-weight: 700; color: #fff; }
.group-head i { width: 6px; height: 2px; background: #fff; }
table { width: calc(100% - 17px); margin-left: 17px; border-collapse: separate; border-spacing: 0; table-layout: fixed; }
th, td { height: 18px; padding: 0; border: 0 solid #525252; border-width: 0 1px 1px 0; font-weight: 400; text-align: left; line-height: 18px; white-space: nowrap; }
th { width: 123px; padding-left: 6px; border-left: 1px solid #525252; }
td { padding-left: 2px; color: #f4f4f4; }
td.dim { color: #a9a9a9; }
td i { display: inline-block; vertical-align: middle; }
td.swatch i { width: 8px; height: 8px; margin: 0 6px 2px 2px; border: 1px solid #111; background: #fff; }
td.line i { width: 63px; height: 1px; margin: 0 5px 2px 2px; background: #f4f4f4; }

.viewport { position: relative; flex: 1; min-width: 0; overflow: hidden; background: #212830; }
.model { position: absolute; inset: 0; }
.view-label { position: absolute; left: 3px; top: 7px; color: #ededed; font: 11px/16px "DejaVu Sans Condensed", "DejaVu Sans", sans-serif; }
.view-buttons { position: absolute; right: 11px; top: 8px; display: flex; gap: 8px; font: 700 13px/14px "Open Sans", sans-serif; }
.view-buttons button { width: 12px; height: 14px; }
.view-buttons .min { border: 0; margin-top: 6px; }
.restore { width: 4px; height: 4px; border: 2px solid #fff; box-shadow: 2px -2px 0 -1px #212830, 2px -2px #fff; }
.cube { position: absolute; right: 15px; top: 34px; font-family: "Open Sans", sans-serif; }
.cube .face { font: 10px "DejaVu Sans Condensed", "Open Sans", sans-serif; fill: #30353d; }
.ucs-name { position: absolute; right: 39px; top: 146px; width: 47px; height: 19px; gap: 7px; border: 1px solid #a4a4b0; border-radius: 4px; background: #84848f; color: #c9c9d1; font: 11px "Liberation Sans", sans-serif; }
.ucs-name i { border: 4px solid transparent; border-top-color: #9a9aa6; border-bottom: 0; }
.navbar { position: absolute; right: 5px; top: 189px; box-sizing: border-box; width: 32px; height: 213px; padding: 3px 4px; display: flex; flex-direction: column; align-items: center; justify-content: space-between; border: 1px solid #777a80; border-radius: 4px; background: #63666c; }
.navbar .caret { border-top-color: #43464c; }
.dot { width: 6px; height: 6px; border: 1px solid #43464c; border-radius: 50%; align-self: flex-end; }
.ucs { position: absolute; left: 4px; bottom: 0; overflow: visible; }
.command { position: absolute; left: 334px; bottom: 0; font: 12px/15px "DejaVu Sans Mono", monospace; }
.history { display: flex; flex-direction: column; align-items: flex-start; gap: 1px; margin-left: 57px; }
.history p { padding: 0 2px; border-radius: 2px; background: #58595b; font: inherit; color: #f4f4f4; white-space: nowrap; }
.history .old { color: #b5b5b5; }
.command-line { width: 337px; height: 27px; margin-top: 1px; display: flex; align-items: center; background: linear-gradient(#6a6a6a, #3c3c3c); }
.grip { width: 6px; height: 18px; margin: 0 6px 0 4px; background: repeating-linear-gradient(transparent 0 2px, #4b4b4b 2px 3px), repeating-linear-gradient(90deg, #8c8c8c 0 2px, #4b4b4b 2px 3px); }
.dismiss { color: #d0d0d0; font-size: 20px; width: 10px; margin-right: 9px; }
.entry { flex: 1; height: 26px; margin-left: 3px; padding: 0 4px; display: flex; align-items: center; gap: 3px; background: #bdbec0; border-radius: 0 2px 2px 0; }
.entry input { flex: 1; min-width: 0; padding: 0 3px; border: 0; background: none; font: italic 12px "DejaVu Sans Mono", monospace; }
.entry input::placeholder { color: #6f7072; opacity: 1; }

footer { flex: none; height: 29px; display: flex; justify-content: space-between; border-top: 1px solid #4d4d4d; box-sizing: border-box; background: #383838; }
.layouts { display: flex; height: 18px; padding-left: 13px; color: #aaa; }
.layouts button { position: relative; width: 66px; z-index: 0; }
.layouts button::before { content: ""; position: absolute; inset: 0 1px; z-index: -1; border-radius: 0 0 9px 7px; background: #555; transform: skewX(-16deg); }
.layouts .active { color: #fff; font-weight: 700; }
.layouts .active::before { background: linear-gradient(#616161, #8a8a8a); }
.layouts .add { width: 28px; color: #ddd; font-size: 16px; }
.status { display: flex; gap: 1px; height: 27px; padding-right: 2px; font-size: 12px; }
.group { display: flex; align-items: center; box-sizing: border-box; border: 1px solid #777; background: #4a4a4a; }
.group button { width: 24px; height: 24px; }
.group button.slim { width: 15px; }
.group button.wide { width: 28px; }
.group .text { width: auto; padding: 0 3px; color: #fff; }
</style>
